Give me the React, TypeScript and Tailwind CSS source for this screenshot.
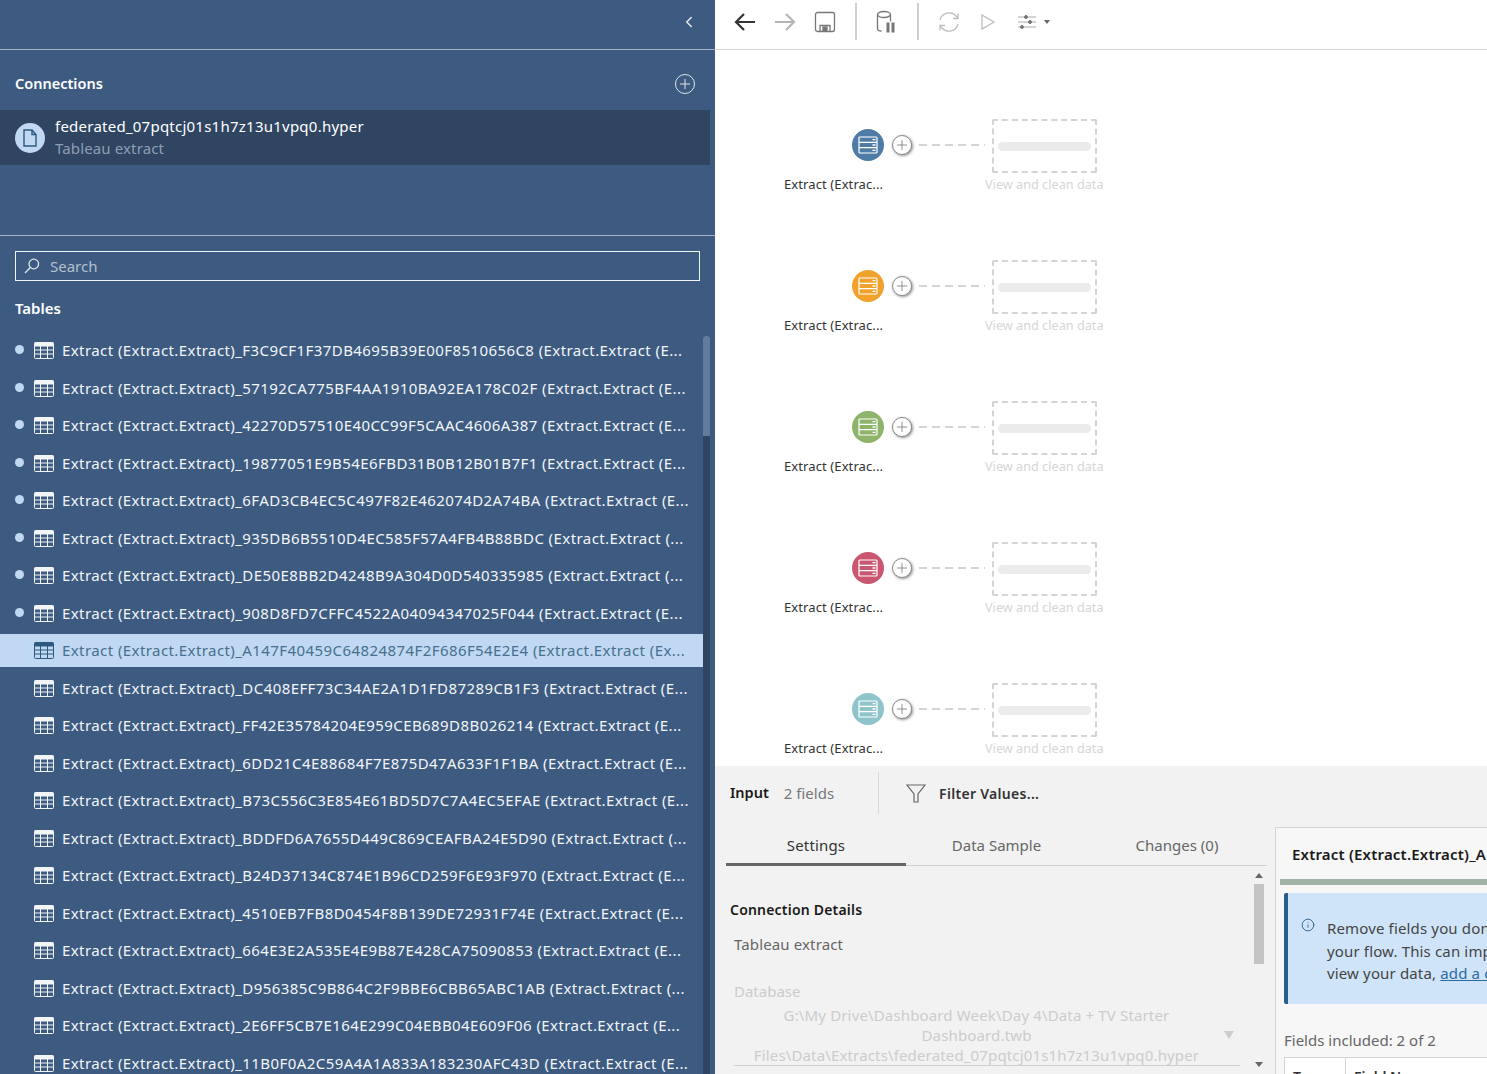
import { ChevronLeft, Plus, Info } from "lucide-react";

const tables = [
  ["F3C9CF1F37DB4695B39E00F8510656C8", "(E..."],
  ["57192CA775BF4AA1910BA92EA178C02F", "(E..."],
  ["42270D57510E40CC99F5CAAC4606A387", "(E..."],
  ["19877051E9B54E6FBD31B0B12B01B7F1", "(E..."],
  ["6FAD3CB4EC5C497F82E462074D2A74BA", "(E..."],
  ["935DB6B5510D4EC585F57A4FB4B88BDC", "(..."],
  ["DE50E8BB2D4248B9A304D0D540335985", "(..."],
  ["908D8FD7CFFC4522A04094347025F044", "(E..."],
  ["A147F40459C64824874F2F686F54E2E4", "(Ex..."],
  ["DC408EFF73C34AE2A1D1FD87289CB1F3", "(E..."],
  ["FF42E35784204E959CEB689D8B026214", "(E..."],
  ["6DD21C4E88684F7E875D47A633F1F1BA", "(E..."],
  ["B73C556C3E854E61BD5D7C7A4EC5EFAE", "(E..."],
  ["BDDFD6A7655D449C869CEAFBA24E5D90", "(..."],
  ["B24D37134C874E1B96CD259F6E93F970", "(E..."],
  ["4510EB7FB8D0454F8B139DE72931F74E", "(E..."],
  ["664E3E2A535E4E9B87E428CA75090853", "(E..."],
  ["D956385C9B864C2F9BBE6CBB65ABC1AB", "(..."],
  ["2E6FF5CB7E164E299C04EBB04E609F06", "(E..."],
  ["11B0F0A2C59A4A1A833A183230AFC43D", "(E..."],
];

const nodes = ["bg-[#4e7ca7]", "bg-[#f1a22d]", "bg-[#8eb36b]", "bg-[#c9576f]", "bg-[#8fc5ca]"];

function TableIcon({ selected }: { selected: boolean }) {
  const head = selected ? "#2c5a7e" : "#f2f5f8";
  return (
    <svg width="20" height="17" viewBox="0 0 20 17" className="shrink-0">
      <rect x="0.5" y="0.5" width="19" height="16" rx="1" fill="none" stroke={head} />
      <rect x="0.5" y="0.5" width="19" height="4" fill={head} />
      <path d="M0 8h20M0 12h20M6.5 4v13M13.5 4v13" stroke={head} fill="none" />
    </svg>
  );
}

function TableRow({ id, tail, index }: { id: string; tail: string; index: number }) {
  const selected = index === 8;
  return (
    <div className={`mb-[4.5px] flex h-[33px] items-center whitespace-nowrap pl-[15px] ${selected ? "bg-[#c0d8f2] text-[#47708f]" : "text-[#f2f5f8]"}`}>
      <span className={`mb-0.5 h-[9px] w-[9px] rounded-full ${index < 8 ? "bg-[#c0d8f2]" : ""}`} />
      <span className="ml-[10px]">
        <TableIcon selected={selected} />
      </span>
      <span className="ml-[8px] text-[15px] tracking-[0.42px]">
        Extract (Extract.Extract)_{id} (Extract.Extract {tail}
      </span>
    </div>
  );
}

function LeftPanel() {
  return (
    <aside className="flex h-full w-[715px] shrink-0 flex-col overflow-hidden bg-[#3d5b80] text-white">
      <div className="flex h-[50px] shrink-0 items-center justify-end border-b border-[#a3b1c3] pb-[6px] pr-[17px]">
        <ChevronLeft className="h-[18px] w-[18px] text-[#e6ebf1]" strokeWidth={2} />
      </div>
      <div className="flex h-[60px] shrink-0 items-center justify-between pl-[15px] pr-5 pt-2">
        <h2 className="text-[14.5px] font-semibold">Connections</h2>
        <span className="flex h-5 w-5 items-center justify-center rounded-full border border-[#dfe5ec]">
          <Plus className="h-4 w-4 text-[#dfe5ec]" strokeWidth={1.5} />
        </span>
      </div>
      <div className="mr-[5px] flex h-[55px] shrink-0 items-center gap-[10px] bg-[#2f4562] pl-[15px]">
        <span className="flex h-[30px] w-[30px] items-center justify-center rounded-full bg-[#c0d8f2]">
          <svg width="16" height="18" viewBox="0 0 16 18" fill="none" stroke="#2c5a7e" strokeWidth="1.4">
            <path d="M2 1h8l4 4.5V17H2z" />
            <path d="M10 1v4.5h4" />
          </svg>
        </span>
        <div className="mb-[2px] whitespace-nowrap">
          <p className="text-[15px] leading-[22px] tracking-[0.24px] text-white">federated_07pqtcj01s1h7z13u1vpq0.hyper</p>
          <p className="text-[15px] leading-[22px] tracking-[0.13px] text-[#8d9fb3]">Tableau extract</p>
        </div>
      </div>
      <div className="h-[71px] shrink-0 border-b border-[#a3b1c3]" />
      <div className="mx-[15px] mt-[15px] flex h-[30px] shrink-0 items-center gap-[11px] border border-[#f2f5f8] pl-2">
        <svg width="16" height="16" viewBox="0 0 16 16" fill="none" stroke="#dfe5ec" strokeWidth="1.3">
          <circle cx="9.8" cy="6" r="4.8" />
          <path d="M6.3 9.5L1 15" />
        </svg>
        <span className="-ml-px text-[15px] text-[#b4c0ce]">Search</span>
      </div>
      <h2 className="mt-[16px] h-[36px] shrink-0 pl-[15px] text-[15px] font-semibold leading-[22px]">Tables</h2>
      <div className="flex min-h-0 flex-1">
        <div className="w-[703px] shrink-0 pt-px">
          {tables.map(([id, tail], i) => (
            <TableRow key={id} id={id} tail={tail} index={i} />
          ))}
        </div>
        <div className="mt-[3px] w-[7px] shrink-0 overflow-hidden rounded-t-[3px] bg-[#2f4562]">
          <div className="h-[100px] bg-[#627c9b]" />
        </div>
      </div>
    </aside>
  );
}

function Toolbar() {
  return (
    <div className="flex h-[50px] shrink-0 items-center border-b border-[#d4d4d4] pb-[6px] pl-[18px]">
      <svg width="24" height="24" viewBox="0 0 24 24" className="mr-4" fill="none" stroke="#333" strokeWidth="2.2">
        <path d="M22 12H3M11 4l-8 8 8 8" />
      </svg>
      <svg width="24" height="24" viewBox="0 0 24 24" className="mr-[17px]" fill="none" stroke="#b5b5b5" strokeWidth="2.2">
        <path d="M2 12h19M13 4l8 8-8 8" />
      </svg>
      <svg width="22" height="22" viewBox="0 0 22 22" fill="none" stroke="#777" strokeWidth="1.3">
        <rect x="1.5" y="1.5" width="19" height="19" rx="2" />
        <path d="M6 20.5v-6h10v6" />
        <rect x="9" y="16" width="4" height="4" fill="#777" />
      </svg>
      <span className="ml-[19px] h-[37px] w-0.5 bg-[#cfcfcf]" />
      <svg width="24" height="26" viewBox="0 0 24 26" className="ml-[17px]" fill="none" stroke="#777" strokeWidth="1.3">
        <ellipse cx="10" cy="5.5" rx="6.5" ry="3" />
        <path d="M3.5 5.5v14c0 1.5 2 2.5 4 2.5M16.5 5.5v7" />
        <path d="M14 13.5v10M19 13.5v10" strokeWidth="3" />
      </svg>
      <span className="ml-[19px] h-[37px] w-0.5 bg-[#cfcfcf]" />
      <svg width="22" height="22" viewBox="0 0 22 22" className="ml-[19px]" fill="none" stroke="#bdbdbd" strokeWidth="1.3">
        <path d="M2 9a9.3 9.3 0 0 1 16-4l2 2M20 13a9.3 9.3 0 0 1-16 4l-2-2" />
        <path d="M20 2.5v5h-5M2 19.5v-5h5" />
      </svg>
      <svg width="16" height="18" viewBox="0 0 16 18" className="ml-[20px]" fill="none" stroke="#bdbdbd" strokeWidth="1.3">
        <path d="M2 2l12 7-12 7z" />
      </svg>
      <svg width="18" height="16" viewBox="0 0 18 16" className="ml-[22px]" fill="none" stroke="#aaa" strokeWidth="1">
        <path d="M0 3h18M0 8h18M0 13h18" />
        <circle cx="8" cy="3" r="1.5" fill="#777" stroke="#777" />
        <circle cx="12" cy="8" r="1.5" fill="#777" stroke="#777" />
        <circle cx="4" cy="13" r="1.5" fill="#777" stroke="#777" />
      </svg>
      <span className="ml-2 h-0 w-0 border-x-[3.5px] border-t-[4px] border-x-transparent border-t-[#666]" />
    </div>
  );
}

function Canvas() {
  return (
    <div className="h-[716px] shrink-0 overflow-hidden bg-white pt-[68px]">
      {nodes.map((c) => (
        <div key={c} className="flex h-[141px] shrink-0">
          <div className="w-[200px] shrink-0">
            <div className="flex h-[54px] items-center pl-[137px]">
              <span className={`flex h-8 w-8 shrink-0 items-center justify-center rounded-full ${c}`}>
                <svg width="20" height="18" viewBox="0 0 20 18" fill="none" stroke="#fff" strokeWidth="1.2">
                  <rect x="1" y="1" width="18" height="16" rx="1" />
                  <path d="M1 6.3h18M1 11.7h18" />
                  <path d="M14.5 3.6h3M14.5 9h3M14.5 14.4h3" strokeWidth="1.4" />
                </svg>
              </span>
              <span className="ml-[8px] flex h-5 w-5 shrink-0 items-center justify-center rounded-full border border-[#8a8a8a] bg-white shadow-[1px_1px_3px_rgba(0,0,0,0.45)]">
                <Plus className="h-4 w-4 text-[#777]" strokeWidth={1.2} />
              </span>
            </div>
            <p className="ml-[69px] whitespace-nowrap text-[13px] leading-6 tracking-[0.1px] text-[#333]">Extract (Extrac...</p>
          </div>
          <div className="-ml-[4px] flex h-[54px] w-[81px] shrink-0 items-center pl-[8px]">
            <svg width="66" height="2" viewBox="0 0 66 2">
              <line x1="0" y1="1" x2="66" y2="1" stroke="#d4d4d4" strokeWidth="2" strokeDasharray="8 5" />
            </svg>
          </div>
          <div className="w-[120px] shrink-0">
            <div className="mt-px flex h-[54px] w-[105px] items-center rounded-[2px] border-2 border-dashed border-[#d4d4d4] px-1">
              <span className="h-[9px] w-full rounded-full bg-[#ebebeb]" />
            </div>
            <p className="-ml-[7px] -mt-px whitespace-nowrap text-[12.7px] leading-6 text-[#d6d6d6]">View and clean data</p>
          </div>
        </div>
      ))}
    </div>
  );
}

function SettingsPanel() {
  return (
    <div className="ml-[11px] w-[541px] shrink-0">
      <div className="flex h-[35px] items-center text-[15px] text-[#666]">
        <span className="flex h-full w-[180px] items-center justify-center tracking-[0.15px] text-[#333]">Settings</span>
        <span className="flex h-full w-[181px] items-center justify-center">Data Sample</span>
        <span className="flex h-full w-[180px] items-center justify-center">Changes (0)</span>
      </div>
      <div className="h-[3px] border-b border-[#cfcfcf]">
        <div className="h-[3px] w-[180px] bg-[#666]" />
      </div>
      <div className="flex">
        <div className="w-[528px] shrink-0 pl-1">
          <h3 className="mt-[34px] text-[14px] font-semibold leading-5 tracking-[0.2px] text-[#1a1a1a]">Connection Details</h3>
          <p className="ml-1 mt-[14px] text-[15px] leading-5 tracking-[0.13px] text-[#666]">Tableau extract</p>
          <p className="ml-1 mt-[27px] text-[15px] leading-5 text-[#ccc]">Database</p>
          <div className="relative ml-1 mt-1 w-[506px] border-b border-[#cfcfcf] pr-[21px] text-center text-[15px] leading-[20px] tracking-[0.15px] text-[#ccc]">
            <p>G:\My Drive\Dashboard Week\Day 4\Data + TV Starter</p>
            <p>Dashboard.twb</p>
            <p className="whitespace-nowrap">Files\Data\Extracts\federated_07pqtcj01s1h7z13u1vpq0.hyper</p>
            <span className="absolute right-[6px] top-[26px] h-0 w-0 border-x-[5px] border-t-[8px] border-x-transparent border-t-[#ccc]" />
          </div>
        </div>
        <div className="w-[10px] shrink-0 pt-[7px]">
          <span className="mx-auto block h-0 w-0 border-x-[4px] border-b-[5px] border-x-transparent border-b-[#666]" />
          <div className="mt-[6px] h-[80px] bg-[#c4c4c4]" />
          <span className="mx-auto mt-[98px] block h-0 w-0 border-x-[4px] border-t-[5px] border-x-transparent border-t-[#666]" />
        </div>
      </div>
    </div>
  );
}

function FieldsCard() {
  return (
    <div className="ml-[8px] mt-[-1px] min-w-[400px] flex-1 overflow-hidden rounded-tl-[2px] border-l border-t border-[#d4d4d4] bg-[#f7f7f7] pl-1">
      <h3 className="ml-[12px] mt-[16px] whitespace-nowrap text-[15px] font-semibold leading-5 tracking-[0.2px] text-[#1a1a1a]">
        Extract (Extract.Extract)_A147F40459C64824874F2F686F54E2E4
      </h3>
      <div className="mt-[15px] h-[6px] bg-[#a0b2a6]" />
      <div className="ml-[4px] mt-[8px] flex h-[111px] items-start whitespace-nowrap rounded-l-[2px] border-l-[4px] border-[#2a5d8a] bg-[#cfe4f9] pl-[13px] pt-[24px] text-[15px] leading-[22.5px] tracking-[0.15px] text-[#444]">
        <Info className="mt-[1px] h-[14px] w-[14px] shrink-0 text-[#2a5d8a]" strokeWidth={1.5} />
        <div className="ml-[12px]">
          <p>Remove fields you don't need to reduce the size of</p>
          <p>your flow. This can improve performance. To</p>
          <p>
            view your data, <span className="text-[#2a6a9e] underline">add a clean step</span>
          </p>
        </div>
      </div>
      <p className="ml-[4px] mt-[26px] text-[15px] leading-5 text-[#666]">Fields included: 2 of 2</p>
      <div className="ml-[4px] mt-[7px] flex h-10 border-l border-t border-[#d4d4d4] bg-white text-[14px] font-semibold text-[#333]">
        <span className="w-[61px] border-r border-[#d4d4d4] pl-2 pt-2">Type</span>
        <span className="pl-2 pt-2">Field Name</span>
      </div>
    </div>
  );
}

function BottomPanel() {
  return (
    <div className="flex min-h-0 flex-1 flex-col overflow-hidden bg-[#f2f2f2]">
      <div className="ml-[15px] mt-[6px] flex h-[42px] shrink-0 items-center">
        <span className="text-[14.5px] font-semibold text-[#1a1a1a]">Input</span>
        <span className="ml-[15px] text-[15px] text-[#777]">2 fields</span>
        <span className="ml-[44px] h-full w-px bg-[#d9d9d9]" />
        <svg width="20" height="20" viewBox="0 0 20 20" className="ml-[27px]" fill="none" stroke="#666" strokeWidth="1.2">
          <path d="M1 2h18l-7 9v8h-4v-8z" />
        </svg>
        <span className="ml-[13px] text-[14px] font-semibold tracking-[0.3px] text-[#333]">Filter Values...</span>
      </div>
      <div className="mt-[14px] flex min-h-0 flex-1">
        <SettingsPanel />
        <FieldsCard />
      </div>
    </div>
  );
}

export default function App() {
  return (
    <div className="flex h-[1074px] w-[1487px] overflow-hidden bg-white font-['Noto_Sans',sans-serif]">
      <LeftPanel />
      <main className="flex min-w-0 flex-1 flex-col">
        <Toolbar />
        <Canvas />
        <BottomPanel />
      </main>
    </div>
  );
}
